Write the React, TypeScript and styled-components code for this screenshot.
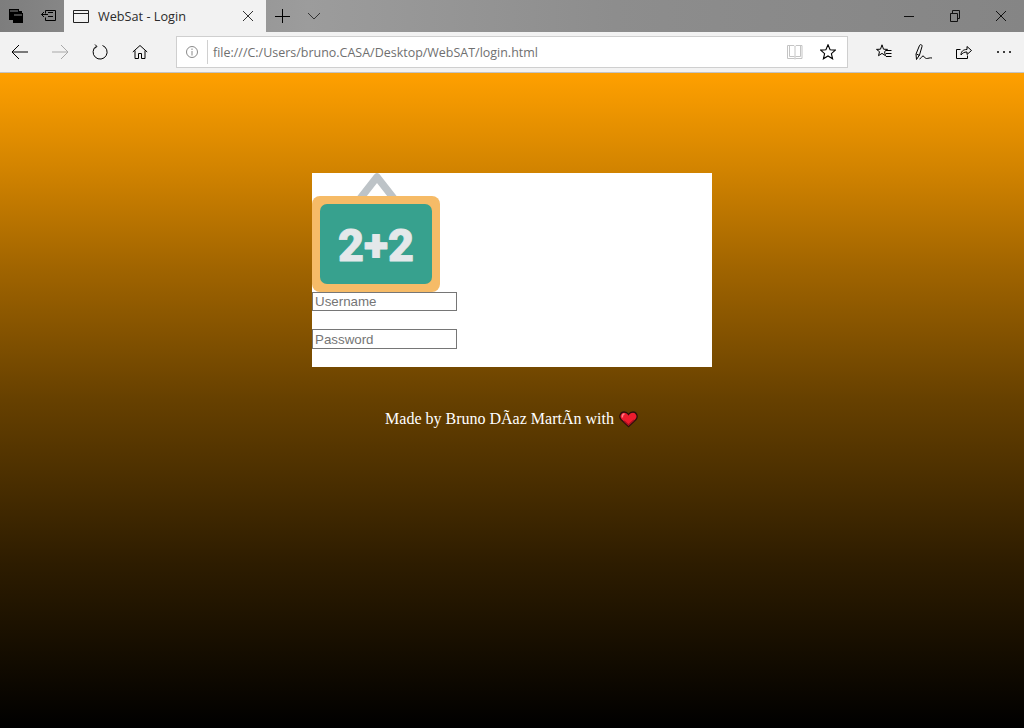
import styled, { createGlobalStyle } from "styled-components";

const GlobalStyle = createGlobalStyle`
  html, body {
    margin: 0;
    padding: 0;
    height: 100%;
    overflow: hidden;
  }
  body {
    font-family: "Liberation Serif", "Times New Roman", serif;
  }
`;

const Window = styled.div`
  width: 1024px;
  height: 728px;
  display: flex;
  flex-direction: column;
`;

const TitleBar = styled.div`
  height: 32px;
  flex: 0 0 32px;
  display: flex;
  align-items: stretch;
  background: linear-gradient(90deg, #7d7d7d 0%, #868686 6%, #9c9c9c 30%, #8d8d8d 60%, #858585 100%);
`;

const TabActions = styled.div`
  width: 64px;
  display: flex;
  align-items: center;
`;

const TabAction = styled.span`
  width: 32px;
  height: 32px;
  display: inline-flex;
  align-items: center;
  justify-content: center;
`;

const Tab = styled.div`
  width: 202px;
  background: #f2f2f2;
  display: flex;
  align-items: center;
  padding: 0 10px 0 9px;
  box-sizing: border-box;
  gap: 9px;
`;

const TabTitle = styled.span`
  flex: 1;
  font-family: "Open Sans", "Liberation Sans", sans-serif;
  font-size: 12.7px;
  color: #2b2b2b;
`;

const TabTools = styled.div`
  display: flex;
  align-items: center;
`;

const TabTool = styled.span`
  width: 32px;
  height: 32px;
  display: inline-flex;
  align-items: center;
  justify-content: center;
`;

const Spacer = styled.div`
  flex: 1;
`;

const WindowButton = styled.span`
  width: 46px;
  height: 32px;
  display: inline-flex;
  align-items: center;
  justify-content: center;
`;

const ToolBar = styled.div`
  height: 41px;
  flex: 0 0 41px;
  box-sizing: border-box;
  background: #f2f2f2;
  border-bottom: 1px solid #c4c4c4;
  display: flex;
  align-items: center;
`;

const NavGroup = styled.div`
  display: flex;
  align-items: center;
  width: 161px;
`;

const NavButton = styled.span`
  width: 40px;
  height: 40px;
  display: inline-flex;
  align-items: center;
  justify-content: center;
`;

const AddressBar = styled.div`
  width: 672px;
  height: 32px;
  margin: 0 16px 0 15px;
  padding-right: 3px;
  box-sizing: border-box;
  background: #fff;
  border: 1px solid #cfcfcf;
  display: flex;
  align-items: center;
`;

const InfoSlot = styled.span`
  width: 31px;
  height: 24px;
  box-sizing: border-box;
  border-right: 1px solid #d0d0d0;
  display: inline-flex;
  align-items: center;
  justify-content: center;
`;

const Url = styled.span`
  flex: 1;
  padding-left: 5px;
  font-family: "Open Sans", "Liberation Sans", sans-serif;
  font-size: 12.47px;
  color: #6f6f6f;
`;

const AddressIcon = styled.span`
  width: 33px;
  height: 30px;
  display: inline-flex;
  align-items: center;
  justify-content: center;
`;

const Page = styled.main`
  flex: 1;
  padding-top: 100px;
  box-sizing: border-box;
  background: linear-gradient(
    180deg,
    #ffa000 0%,
    #d48500 14%,
    #a06400 30%,
    #664000 50%,
    #2d1c00 75%,
    #000 100%
  );
`;

const Card = styled.form`
  width: 400px;
  height: 194px;
  margin: 0 auto;
  background: #fff;
`;

const Logo = styled.svg`
  display: block;
  width: 128px;
  height: 119px;
`;

const Field = styled.input`
  display: block;
  width: 145px;
  height: 19px;
  margin: 0 0 18px;
  padding: 1px 2px;
  box-sizing: border-box;
  border: 1px solid #767676;
  border-radius: 0;
  outline: none;
  background: #fff;
  font-family: "Liberation Sans", Arial, sans-serif;
  font-size: 13.33px;

  &::placeholder {
    color: #757575;
    opacity: 1;
  }
`;

const PasswordField = styled(Field)`
  height: 20px;
`;

const Footer = styled.p`
  margin: 43px 0 0;
  display: flex;
  justify-content: center;
  align-items: center;
  gap: 5px;
  color: #fff;
  font-size: 16px;
  line-height: 18px;
`;

function Stroke({ d, size = 16, color = "#000", width = 1 }: { d: string; size?: number; color?: string; width?: number }) {
  return (
    <svg width={size} height={size} viewBox="0 0 16 16" fill="none" stroke={color} strokeWidth={width}>
      <path d={d} />
    </svg>
  );
}

export default function App() {
  return (
    <>
      <GlobalStyle />
      <Window>
        <TitleBar>
          <TabActions>
            <TabAction>
              <svg width="16" height="16" viewBox="0 0 16 16">
                <path d="M1 1h10v2h3v2h1v10H5v-3H1z" fill="#000" />
                <path d="M2 3h8M6 7h8" stroke="#888" strokeWidth="1" />
              </svg>
            </TabAction>
            <TabAction>
              <Stroke d="M5.500 2.500h10v10h-10v-3M5.500 5.500v-3M8 6.500H1.500M4 4L1.500 6.500 4 9M8 4.500h5M8 8.500h5" />
            </TabAction>
          </TabActions>
          <Tab>
            <Stroke d="M.5 2.500h15v12H.5zM.5 5.500h15" color="#222" />
            <TabTitle>WebSat - Login</TabTitle>
            <Stroke d="M3 3l10 10M13 3L3 13" color="#333" />
          </Tab>
          <TabTools>
            <TabTool>
              <Stroke d="M8.500 1v14M1 8.500h15" />
            </TabTool>
            <TabTool>
              <Stroke d="M2 5l6 6 6-6" color="#333" />
            </TabTool>
          </TabTools>
          <Spacer />
          <WindowButton>
            <Stroke d="M3 8.500h10" color="#111" />
          </WindowButton>
          <WindowButton>
            <Stroke d="M3.500 5.500h7v8h-7zM5.500 5.500v-3h7v8h-2" color="#111" />
          </WindowButton>
          <WindowButton>
            <Stroke d="M3 3l10 10M13 3L3 13" color="#111" />
          </WindowButton>
        </TitleBar>
        <ToolBar>
          <NavGroup>
            <NavButton>
              <svg width="16" height="16" viewBox="0 0 16 16" fill="none" stroke="#000">
                <path d="M0 8h16M7 1L0 8l7 7" />
              </svg>
            </NavButton>
            <NavButton>
              <svg width="16" height="16" viewBox="0 0 16 16" fill="none" stroke="#a8a8a8">
                <path d="M0 8h16M9 1l7 7-7 7" />
              </svg>
            </NavButton>
            <NavButton>
              <svg width="16" height="16" viewBox="0 0 16 16" fill="none" stroke="#000">
                <path d="M4 2.400A7 7 0 1 0 10.500 1.500M3 .5l2 2-2.500 2" />
              </svg>
            </NavButton>
            <NavButton>
              <svg width="16" height="16" viewBox="0 0 16 16" fill="none" stroke="#000">
                <path d="M.8 8L8 1.500 15.200 8M3 6.500v8h3.500v-5h3v5H13v-8" />
              </svg>
            </NavButton>
          </NavGroup>
          <AddressBar>
            <InfoSlot>
              <svg width="14" height="14" viewBox="0 0 14 14" fill="none" stroke="#8a8a8a">
                <circle cx="7" cy="7" r="5.500" />
                <path d="M7 6v4.500M7 3.500v1.500" />
              </svg>
            </InfoSlot>
            <Url>file:///C:/Users/bruno.CASA/Desktop/WebSAT/login.html</Url>
            <AddressIcon>
              <svg width="16" height="16" viewBox="0 0 16 16" fill="none" stroke="#c4c4c4">
                <path d="M.5 1.500h6.500l1 1 1-1h6v13h-6l-1 .5-1-.5H.5zM8 2.500V14M2.500 1.500v11h5M13.500 1.500v11h-5" />
              </svg>
            </AddressIcon>
            <AddressIcon>
              <svg width="16" height="16" viewBox="0 0 16 16" fill="none" stroke="#000" strokeWidth="1.100">
                <path d="M8 .8l2.100 4.900 5.300.4-4 3.500 1.200 5.200L8 12l-4.600 2.800 1.200-5.200-4-3.500 5.300-.4z" />
              </svg>
            </AddressIcon>
          </AddressBar>
          <NavButton>
            <svg width="16" height="16" viewBox="0 0 16 16" fill="none" stroke="#000">
              <path d="M6 .8l1.500 4.400 4 .2-3 2.300 1 4-3.500-2.300-3.500 2.300 1-4-3-2.300 4-.2zM9.500 6.500h6M10 9.500h5.500M10 12.500h5.500" />
            </svg>
          </NavButton>
          <NavButton>
            <svg width="18" height="18" viewBox="0 0 18 18" fill="none" stroke="#000">
              <path d="M1.500 16.500L1 11l3.500-8.500c.5-1.500 3-1 2.500 1L4.500 12zM1.500 11l3 1.500M4.500 16c1.500 0 2-3 3.500-3s1.500 2.500 3.500 2.500c2 0 3-1 5.500-.5" />
            </svg>
          </NavButton>
          <NavButton>
            <svg width="16" height="16" viewBox="0 0 16 16" fill="none" stroke="#000">
              <path d="M4.500 5.500H.5v9h11v-3M5 11c0-3.500 2-5.500 6-5.500V2.500l4.500 4-4.500 4V8c-3 0-4.500 1-6 3z" />
            </svg>
          </NavButton>
          <NavButton>
            <svg width="16" height="16" viewBox="0 0 16 16" fill="#000">
              <circle cx="2" cy="8" r="1" />
              <circle cx="8" cy="8" r="1" />
              <circle cx="14" cy="8" r="1" />
            </svg>
          </NavButton>
        </ToolBar>
        <Page>
          <Card>
            <Logo viewBox="0 0 128 119">
              <path d="M47 27L65 4l18 23" fill="none" stroke="#bdc3c7" strokeWidth="7.500" strokeLinejoin="round" />
              <rect x="0" y="23" width="128" height="96" rx="8" fill="#f6bb67" />
              <rect x="8" y="31" width="112" height="80" rx="7" fill="#37a18e" />
              <text
                x="64"
                y="88"
                textAnchor="middle"
                fontFamily="Roboto, 'Liberation Sans', sans-serif"
                fontWeight="900"
                fontSize="45"
                fill="#e4e8ea"
                stroke="#e4e8ea"
                strokeWidth="0.8"
                strokeLinejoin="round"
              >
                2+2
              </text>
            </Logo>
            <Field placeholder="Username" />
            <PasswordField placeholder="Password" />
          </Card>
          <Footer>
            <span>Made by Bruno DÃ{"\u00AD"}az MartÃ{"\u00AD"}n with</span>
            <svg width="20" height="18" viewBox="0 0 20 18">
              <path
                d="M9.500 16.500L2 9.500C-.5 6.500 1.500 2 5 2c2 0 3.500 1 4.500 2.500C10.500 3 12 2 14 2c3.500 0 5.500 4.500 3 7.500z"
                fill="#ed1c2e"
                stroke="#2a0f0c"
                strokeWidth="1.300"
              />
              <path d="M3.500 7.500C3 5.500 4 4 5.500 4" fill="none" stroke="#ff7a86" strokeWidth="1.500" />
              <path d="M5 11l4.500 4 5.500-5" fill="none" stroke="#a50f1f" strokeWidth="1.500" />
            </svg>
          </Footer>
        </Page>
      </Window>
    </>
  );
}
